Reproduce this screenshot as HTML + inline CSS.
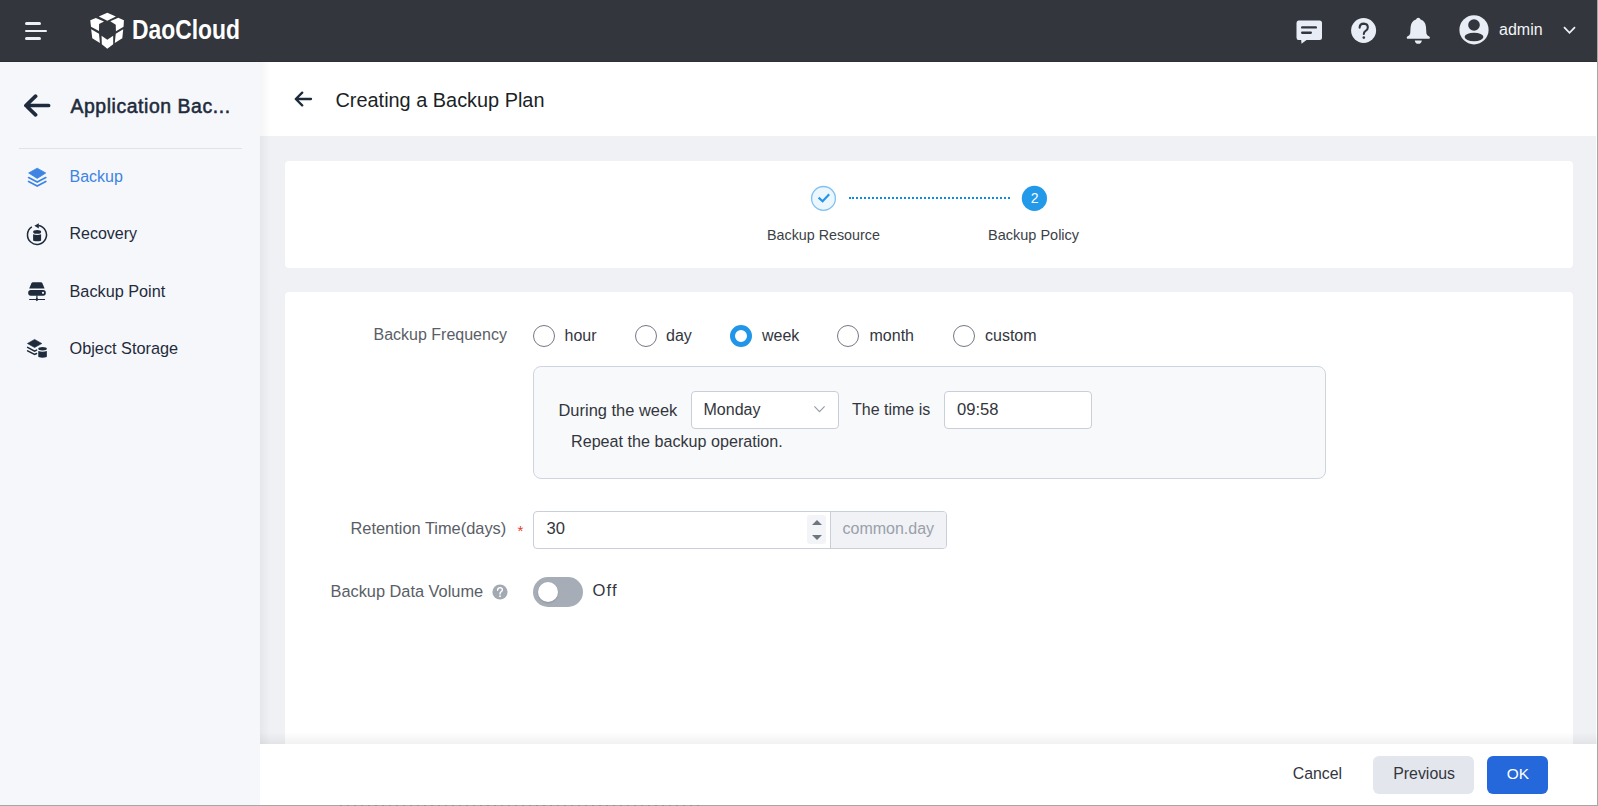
<!DOCTYPE html>
<html><head><meta charset="utf-8">
<style>
*{box-sizing:border-box;margin:0;padding:0}
html,body{width:1598px;height:806px;overflow:hidden;background:#fff;font-family:"Liberation Sans",sans-serif}
.abs{position:absolute}
.t{position:absolute;white-space:nowrap;line-height:1;font-size:16px}
#hdr{left:0;top:0;width:1598px;height:62px;background:#33363c;border-bottom:1px solid #2c2f34}
#side{left:0;top:62px;width:260px;height:744px;background:#f6f7fb}
#main{left:260px;top:62px;width:1336px;height:744px;background:#f0f1f5}
#ptitle{left:260px;top:62px;width:1336px;height:74px;background:#fff}
.card{background:#fff;border-radius:4px}
.nav{color:#1e2b3c}
.lbl{color:#5a5e66}
.txt{color:#33363d}
.radio{position:absolute;width:22px;height:22px;border-radius:50%;border:1px solid #737883;background:#fff}
.radio.on{border:5.6px solid #2196e8}
.inp{position:absolute;background:#fff;border:1px solid #c9ced8;border-radius:4px}
</style></head><body>
<!-- header -->
<div id="hdr" class="abs">
  <div class="abs" style="left:25px;top:22px;width:16px;height:3px;border-radius:2px;background:#eef0f5"></div>
  <div class="abs" style="left:25px;top:29.7px;width:22px;height:2.6px;border-radius:2px;background:#eef0f5"></div>
  <div class="abs" style="left:25px;top:37px;width:16px;height:3px;border-radius:2px;background:#eef0f5"></div>
  <!-- logo cube -->
  <svg class="abs" style="left:86px;top:8px" width="44" height="44" viewBox="0 0 44 44"><g fill="#fff"><path d="M12.83 8.46 L21.29 4.80 L29.91 8.46 L21.29 12.66 Z"/><path d="M4.26 12.28 L9.83 9.93 L18.01 13.54 L13.10 16.10 L12.99 22.93 L5.02 18.83 Z"/><path d="M24.29 13.37 L32.21 9.83 L37.94 12.28 L37.55 18.83 L29.91 23.20 L29.75 16.65 Z"/><path d="M5.19 21.29 L12.99 25.66 L13.92 34.93 L6.28 30.29 Z"/><path d="M37.23 21.29 L29.75 25.66 L28.77 34.93 L36.30 30.29 Z"/><path d="M15.56 27.84 L21.29 31.66 L27.18 27.84 L27.18 36.30 L21.29 40.67 L15.83 36.30 Z"/></g></svg>
  <svg class="abs" style="left:131px;top:14px" width="112" height="30">
    <text x="1" y="24.8" textLength="108" lengthAdjust="spacingAndGlyphs" font-family="Liberation Sans" font-weight="700" font-size="27.5" fill="#fff">DaoCloud</text>
  </svg>
  <!-- chat -->
  <svg class="abs" style="left:1296px;top:20px" width="27" height="24" viewBox="0 0 27 24">
    <path d="M2.5 0.5 H23.5 Q26 0.5 26 3 V17.5 Q26 20 23.5 20 H10.5 L5.5 23.8 L5.2 20 H2.5 Q0.5 20 0.5 17.5 V3 Q0.5 0.5 2.5 0.5 Z" fill="#e9edf5"/>
    <rect x="5" y="6.2" width="16" height="2.4" rx="1.2" fill="#33363c"/>
    <rect x="5" y="11.6" width="11" height="2.3" rx="1.15" fill="#33363c"/>
  </svg>
  <!-- help -->
  <svg class="abs" style="left:1351px;top:18px" width="26" height="26" viewBox="0 0 26 26">
    <circle cx="12.6" cy="12.5" r="12.5" fill="#e9edf5"/>
    <path d="M8.6 9.6 Q8.8 5.6 12.8 5.6 Q16.8 5.8 16.8 9.4 Q16.8 11.6 14.6 12.8 Q12.8 13.8 12.8 16" fill="none" stroke="#33363c" stroke-width="2.1" stroke-linecap="round"/>
    <circle cx="12.8" cy="19.6" r="1.3" fill="#33363c"/>
  </svg>
  <!-- bell -->
  <svg class="abs" style="left:1406px;top:17px" width="25" height="28" viewBox="0 0 25 28">
    <path d="M12.3 0.8 Q14 0.8 14.6 2.6 Q19.5 4.2 20 10 L20.4 16.5 Q20.6 18.5 23.6 19.8 Q24.4 21 23.4 21.8 H1.2 Q0.2 21 1 19.8 Q4 18.5 4.2 16.5 L4.6 10 Q5.1 4.2 10 2.6 Q10.6 0.8 12.3 0.8 Z" fill="#e9edf5"/>
    <path d="M8.8 23.4 H15.8 Q15.4 26.8 12.3 26.8 Q9.2 26.8 8.8 23.4 Z" fill="#e9edf5"/>
  </svg>
  <!-- user -->
  <svg class="abs" style="left:1459px;top:15px" width="30" height="30" viewBox="0 0 30 30">
    <circle cx="15" cy="14.8" r="14.6" fill="#e9edf5"/>
    <circle cx="15" cy="10" r="5.8" fill="#33363c"/>
    <ellipse cx="15" cy="22" rx="9.4" ry="4.2" fill="#33363c"/>
  </svg>
  <div class="t" style="left:1499px;top:21.5px;color:#f2f4f8">admin</div>
  <svg class="abs" style="left:1563px;top:26px" width="13" height="9" viewBox="0 0 13 9">
    <path d="M1 1.2 L6.5 6.8 L12 1.2" fill="none" stroke="#eef0f5" stroke-width="1.8"/>
  </svg>
</div>

<!-- sidebar -->
<div id="side" class="abs">
  <svg class="abs" style="left:23px;top:32px" width="28" height="24" viewBox="0 0 28 24">
    <path d="M12.6 2.2 L2.9 11.5 L12.6 20.8 M3.2 11.5 H25.6" fill="none" stroke="#1e2b3c" stroke-width="3.7" stroke-linecap="round" stroke-linejoin="round"/>
  </svg>
  <div class="t nav" style="left:70.5px;top:35px;font-size:19.4px;font-weight:400;-webkit-text-stroke:0.55px #1e2b3c;letter-spacing:0.57px">Application Bac...</div>
  <div class="abs" style="left:19px;top:86px;width:223px;height:1px;background:#dfe2e8"></div>
  <!-- backup icon -->
  <svg class="abs" style="left:27px;top:105px" width="21" height="21" viewBox="0 0 21 21">
    <path d="M1.6 6 L10.2 1.2 L18.8 6 L10.2 11.4 Z" fill="#3d84e3" stroke="#3d84e3" stroke-width="0.8" stroke-linejoin="round"/>
    <path d="M1.6 10.6 L10.2 15.1 L18.8 10.6" fill="none" stroke="#3d84e3" stroke-width="1.7" stroke-linecap="round"/>
    <path d="M1.6 14.5 L10.2 19 L18.8 14.5" fill="none" stroke="#3d84e3" stroke-width="1.7" stroke-linecap="round"/>
  </svg>
  <div class="t" style="left:69.5px;top:106.5px;color:#3d84e3">Backup</div>
  <!-- recovery icon -->
  <svg class="abs" style="left:26px;top:160px" width="23" height="24" viewBox="0 0 23 24">
    <path d="M5.85 4.9 A9.5 9.5 0 1 0 12.4 3.5" fill="none" stroke="#1e2b3c" stroke-width="1.5"/>
    <path d="M8.4 3.8 L12.8 1.2 L12.8 6.4 Z" fill="#1e2b3c"/>
    <ellipse cx="11.1" cy="9.9" rx="4" ry="1.9" fill="#1e2b3c"/>
    <path d="M7.1 12.2 Q11.1 13.6 15.1 12.2 V18.2 Q15.1 19.2 11.1 19.2 Q7.1 19.2 7.1 18.2 Z" fill="#1e2b3c"/>
  </svg>
  <div class="t nav" style="left:69.5px;top:163.5px">Recovery</div>
  <!-- backup point icon -->
  <svg class="abs" style="left:27px;top:219px" width="20" height="22" viewBox="0 0 20 22">
    <path d="M6 1.2 H13.8 Q15 1.2 15.5 2.4 L17.6 7.6 H2.2 L4.3 2.4 Q4.8 1.2 6 1.2 Z" fill="#1e2b3c"/>
    <rect x="1.2" y="8.9" width="17.6" height="5.8" rx="2.6" fill="#1e2b3c"/>
    <circle cx="16" cy="11.8" r="1.1" fill="#f6f7fb"/>
    <rect x="9.3" y="14.4" width="1.2" height="4" fill="#1e2b3c"/>
    <rect x="2.2" y="18" width="15.8" height="1" fill="#1e2b3c"/>
    <path d="M9.9 16.8 L11.6 18.5 L9.9 20.2 L8.2 18.5 Z" fill="#1e2b3c"/>
  </svg>
  <div class="t nav" style="left:69.5px;top:221.3px;font-size:16.25px">Backup Point</div>
  <!-- object storage icon -->
  <svg class="abs" style="left:26px;top:276px" width="22" height="21" viewBox="0 0 22 21">
    <path d="M1.4 5.5 L8.6 1.4 L15.8 5.5 L8.6 9.5 Z" fill="#1e2b3c" stroke="#1e2b3c" stroke-width="0.6" stroke-linejoin="round"/>
    <path d="M1.6 9.4 L8.6 13.1 L10.6 12.1" fill="none" stroke="#1e2b3c" stroke-width="1.5" stroke-linecap="round"/>
    <path d="M1.6 12.8 L8.6 16.5 L10.6 15.5" fill="none" stroke="#1e2b3c" stroke-width="1.5" stroke-linecap="round"/>
    <ellipse cx="16.55" cy="10.7" rx="4.3" ry="1.7" fill="#1e2b3c"/>
    <path d="M12.25 13 Q16.55 14.4 20.85 13 V18.6 Q20.85 19.7 16.55 19.7 Q12.25 19.7 12.25 18.6 Z" fill="#1e2b3c"/>
  </svg>
  <div class="t nav" style="left:69.5px;top:278px;font-size:16.3px">Object Storage</div>
</div>

<div id="main" class="abs"></div>
<div id="ptitle" class="abs">
  <svg class="abs" style="left:34px;top:29px" width="19" height="17" viewBox="0 0 19 17">
    <path d="M8.2 1.6 L1.8 8 L8.2 14.4 M2.4 8 H17" fill="none" stroke="#1e2b3c" stroke-width="2.3" stroke-linecap="round" stroke-linejoin="round"/>
  </svg>
  <div class="t" style="left:75.5px;top:28.5px;font-size:19.9px;color:#1b1f26">Creating a Backup Plan</div>
</div>

<div class="abs" style="left:260px;top:62px;width:10px;height:682px;background:linear-gradient(90deg,rgba(0,0,0,0.045),rgba(0,0,0,0))"></div>
<!-- steps card -->
<div class="abs card" style="left:285px;top:161px;width:1288px;height:107px"></div>
<svg class="abs" style="left:800px;top:180px" width="260" height="36">
  <circle cx="23.5" cy="18.4" r="11.9" fill="#ebf6fd" stroke="#7fc2f1" stroke-width="1.3"/>
  <path d="M18.6 17.6 L22.6 21.2 L29.2 14.2" fill="none" stroke="#2196e8" stroke-width="2.1"/>
  <rect x="49" y="17" width="2" height="2" fill="#0b8ae4"/><line x1="52" y1="18" x2="210" y2="18" stroke="#0b8ae4" stroke-width="2" stroke-dasharray="2 2"/>
  <circle cx="234.4" cy="18.4" r="12.6" fill="#2299e9"/>
  <text x="234.6" y="23.2" text-anchor="middle" font-family="Liberation Sans" font-size="14" fill="#fff">2</text>
</svg>
<div class="t" style="left:767px;top:228px;font-size:14.3px;color:#3b3f47">Backup Resource</div>
<div class="t" style="left:988px;top:228px;font-size:14.5px;color:#3b3f47">Backup Policy</div>

<!-- form card -->
<div class="abs card" style="left:285px;top:292px;width:1288px;height:500px"></div>
<div class="t lbl" style="left:373.5px;top:327px">Backup Frequency</div>
<div class="radio" style="left:533px;top:325px"></div>
<div class="t txt" style="left:564.5px;top:327.5px">hour</div>
<div class="radio" style="left:635px;top:325px"></div>
<div class="t txt" style="left:666px;top:327.5px">day</div>
<div class="radio on" style="left:730px;top:325px"></div>
<div class="t txt" style="left:762px;top:327.5px">week</div>
<div class="radio" style="left:837px;top:325px"></div>
<div class="t txt" style="left:869.5px;top:327.5px">month</div>
<div class="radio" style="left:953px;top:325px"></div>
<div class="t txt" style="left:985px;top:327.5px">custom</div>

<div class="abs" style="left:533px;top:366px;width:793px;height:113px;border:1px solid #cfd5df;border-radius:8px;background:#f8f9fb"></div>
<div class="t txt" style="left:558.5px;top:401.5px;font-size:16.45px">During the week</div>
<div class="inp" style="left:691px;top:391px;width:148px;height:38px"></div>
<div class="t txt" style="left:703.5px;top:401.8px">Monday</div>
<svg class="abs" style="left:812px;top:404px" width="14" height="10" viewBox="0 0 14 10">
  <path d="M2.4 2.4 L7.5 7.7 L12.6 2.4" fill="none" stroke="#979da8" stroke-width="1.15"/>
</svg>
<div class="t txt" style="left:852px;top:402.2px">The time is</div>
<div class="inp" style="left:944px;top:391px;width:148px;height:38px"></div>
<div class="t txt" style="left:957px;top:402px;font-size:16.6px">09:58</div>
<div class="t txt" style="left:571px;top:433px;font-size:16.15px">Repeat the backup operation.</div>

<div class="t lbl" style="left:350.5px;top:520px;font-size:16.4px">Retention Time(days)</div>
<div class="t" style="left:517.5px;top:523px;color:#e8392f;font-size:15px">*</div>
<div class="inp" style="left:533px;top:511px;width:414px;height:38px;border-radius:4px"></div>
<div class="abs" style="left:830px;top:512px;width:116px;height:36px;background:#f0f2f6;border-left:1px solid #c9ced8;border-radius:0 3px 3px 0"></div>
<div class="t txt" style="left:546.5px;top:520.8px;font-size:16.6px">30</div>
<div class="abs" style="left:807px;top:515px;width:19px;height:29px;background:#f3f4f7;border-radius:3px"></div>
<svg class="abs" style="left:810px;top:518px" width="14" height="24" viewBox="0 0 14 24">
  <path d="M2 7 L7 2 L12 7 Z" fill="#6e7580"/>
  <path d="M2 17 L7 22 L12 17 Z" fill="#6e7580"/>
</svg>
<div class="t" style="left:842.5px;top:521px;color:#9aa0aa">common.day</div>

<div class="t lbl" style="left:330.5px;top:582.5px;font-size:16.35px">Backup Data Volume</div>
<svg class="abs" style="left:492px;top:584px" width="16" height="16" viewBox="0 0 16 16">
  <circle cx="8" cy="8" r="7.6" fill="#a3a9b3"/>
  <path d="M5.6 6.2 Q5.8 3.6 8 3.6 Q10.4 3.7 10.4 5.8 Q10.4 7.2 9 7.9 Q8 8.5 8 10" fill="none" stroke="#fff" stroke-width="1.4" stroke-linecap="round"/>
  <circle cx="8" cy="12.2" r="0.9" fill="#fff"/>
</svg>
<div class="abs" style="left:533px;top:577px;width:50px;height:30px;border-radius:15px;background:#a6adb7"></div>
<div class="abs" style="left:537.5px;top:581.5px;width:20.5px;height:20.5px;border-radius:50%;background:#fff;box-shadow:0 1px 2px rgba(0,0,0,0.15)"></div>
<div class="t txt" style="left:592.5px;top:583px;font-size:16.6px;letter-spacing:1.1px">Off</div>

<!-- footer -->
<div class="abs" style="left:260px;top:732px;width:1337px;height:12px;background:linear-gradient(180deg,rgba(0,0,0,0),rgba(0,0,0,0.055))"></div>
<div class="abs" style="left:260px;top:744px;width:1337px;height:62px;background:#fff"></div>
<div class="t txt" style="left:1292.8px;top:765.8px;font-size:15.85px">Cancel</div>
<div class="abs" style="left:1373px;top:756px;width:101px;height:38px;border-radius:6px;background:#e3e6ed"></div>
<div class="t txt" style="left:1393.2px;top:765.8px;font-size:15.9px">Previous</div>
<div class="abs" style="left:1487px;top:756px;width:61px;height:38px;border-radius:6px;background:#2468dc"></div>
<div class="t" style="left:1506.8px;top:766px;font-size:15.4px;color:#fff">OK</div>

<!-- edges -->
<div class="abs" style="left:1597px;top:0;width:1px;height:806px;background:#a6a6a6"></div>
<div class="abs" style="left:0;top:805px;width:1598px;height:1px;background:#a6a6a6"></div>
<div class="abs" style="left:340px;top:805px;width:360px;height:1px;background:repeating-linear-gradient(90deg,#6a6f78 0 2px,rgba(0,0,0,0) 2px 7px);opacity:0.35"></div>
</body></html>
